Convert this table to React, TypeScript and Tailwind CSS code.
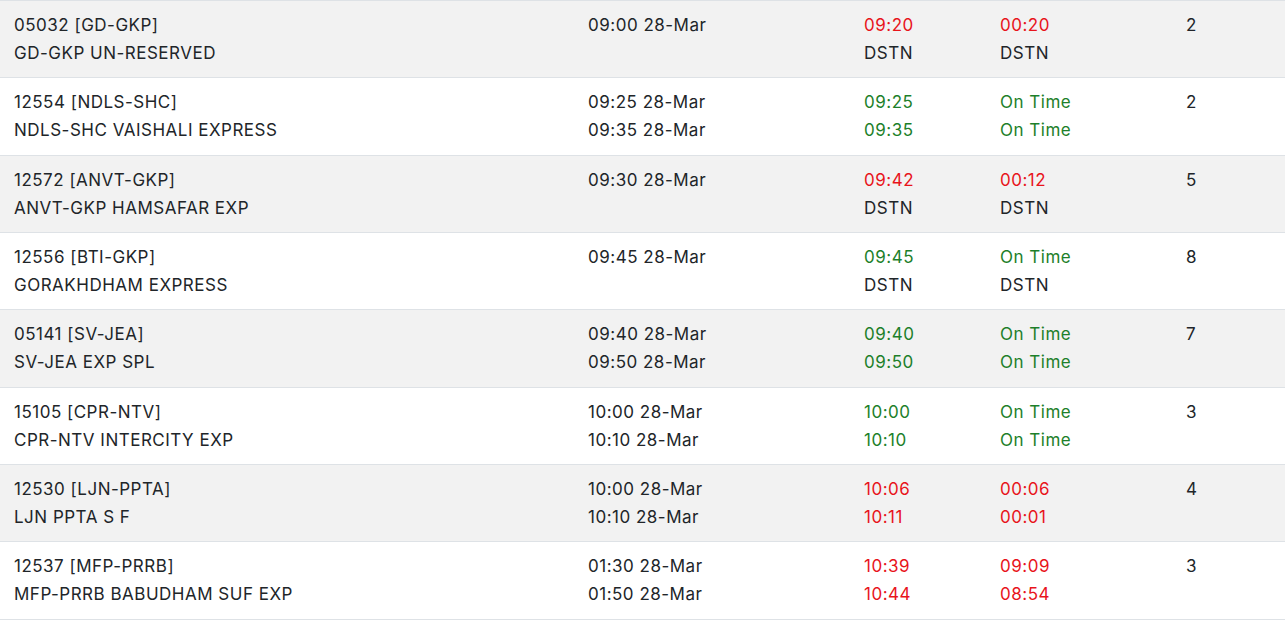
type Row = {
  train: string
  name: string
  sched: string[]
  actual: string[]
  delay: string[]
  pf: string
}

const rows: Row[] = [
  { train: "05032 [GD-GKP]", name: "GD-GKP UN-RESERVED", sched: ["09:00 28-Mar"], actual: ["09:20", "DSTN"], delay: ["00:20", "DSTN"], pf: "2" },
  { train: "12554 [NDLS-SHC]", name: "NDLS-SHC VAISHALI EXPRESS", sched: ["09:25 28-Mar", "09:35 28-Mar"], actual: ["09:25", "09:35"], delay: ["On Time", "On Time"], pf: "2" },
  { train: "12572 [ANVT-GKP]", name: "ANVT-GKP HAMSAFAR EXP", sched: ["09:30 28-Mar"], actual: ["09:42", "DSTN"], delay: ["00:12", "DSTN"], pf: "5" },
  { train: "12556 [BTI-GKP]", name: "GORAKHDHAM EXPRESS", sched: ["09:45 28-Mar"], actual: ["09:45", "DSTN"], delay: ["On Time", "DSTN"], pf: "8" },
  { train: "05141 [SV-JEA]", name: "SV-JEA EXP SPL", sched: ["09:40 28-Mar", "09:50 28-Mar"], actual: ["09:40", "09:50"], delay: ["On Time", "On Time"], pf: "7" },
  { train: "15105 [CPR-NTV]", name: "CPR-NTV INTERCITY EXP", sched: ["10:00 28-Mar", "10:10 28-Mar"], actual: ["10:00", "10:10"], delay: ["On Time", "On Time"], pf: "3" },
  { train: "12530 [LJN-PPTA]", name: "LJN PPTA S F", sched: ["10:00 28-Mar", "10:10 28-Mar"], actual: ["10:06", "10:11"], delay: ["00:06", "00:01"], pf: "4" },
  { train: "12537 [MFP-PRRB]", name: "MFP-PRRB BABUDHAM SUF EXP", sched: ["01:30 28-Mar", "01:50 28-Mar"], actual: ["10:39", "10:44"], delay: ["09:09", "08:54"], pf: "3" },
]

// late times red, on-time green, DSTN stays plain
const tone = (v: string, late: boolean) => {
  if (v === "DSTN") return "text-[#212529]"
  return late ? "text-[#e8141b]" : "text-[#1d7f2a]"
}

const isLate = (r: Row) => r.delay.some((d) => d !== "On Time" && d !== "DSTN")

export default function App() {
  return (
    <div className="w-[1285px] bg-white text-[17px] leading-[28px] tracking-[0.5px] text-[#212529] font-['Inter',sans-serif]">
      <div className="border-t border-[#dee2e6]">
        {rows.map((r, i) => {
          const late = isLate(r)
          return (
            <div
              key={r.train}
              className={`grid grid-cols-[574px_276px_136px_186px_1fr] h-[77.33px] border-b border-[#dee2e6] ${i % 2 === 0 ? "bg-[#f2f2f2]" : "bg-white"}`}
            >
              <div className="px-[14px] pt-[10px]">
                <div>{r.train}</div>
                <div>{r.name}</div>
              </div>
              <div className="px-[14px] pt-[10px]">
                {r.sched.map((s) => (
                  <div key={s}>{s}</div>
                ))}
              </div>
              <div className="px-[14px] pt-[10px]">
                {r.actual.map((s, k) => (
                  <div key={k} className={tone(s, late)}>{s}</div>
                ))}
              </div>
              <div className="px-[14px] pt-[10px]">
                {r.delay.map((s, k) => (
                  <div key={k} className={tone(s, late)}>{s}</div>
                ))}
              </div>
              <div className="px-[14px] pt-[10px]">{r.pf}</div>
            </div>
          )
        })}
      </div>
    </div>
  )
}
